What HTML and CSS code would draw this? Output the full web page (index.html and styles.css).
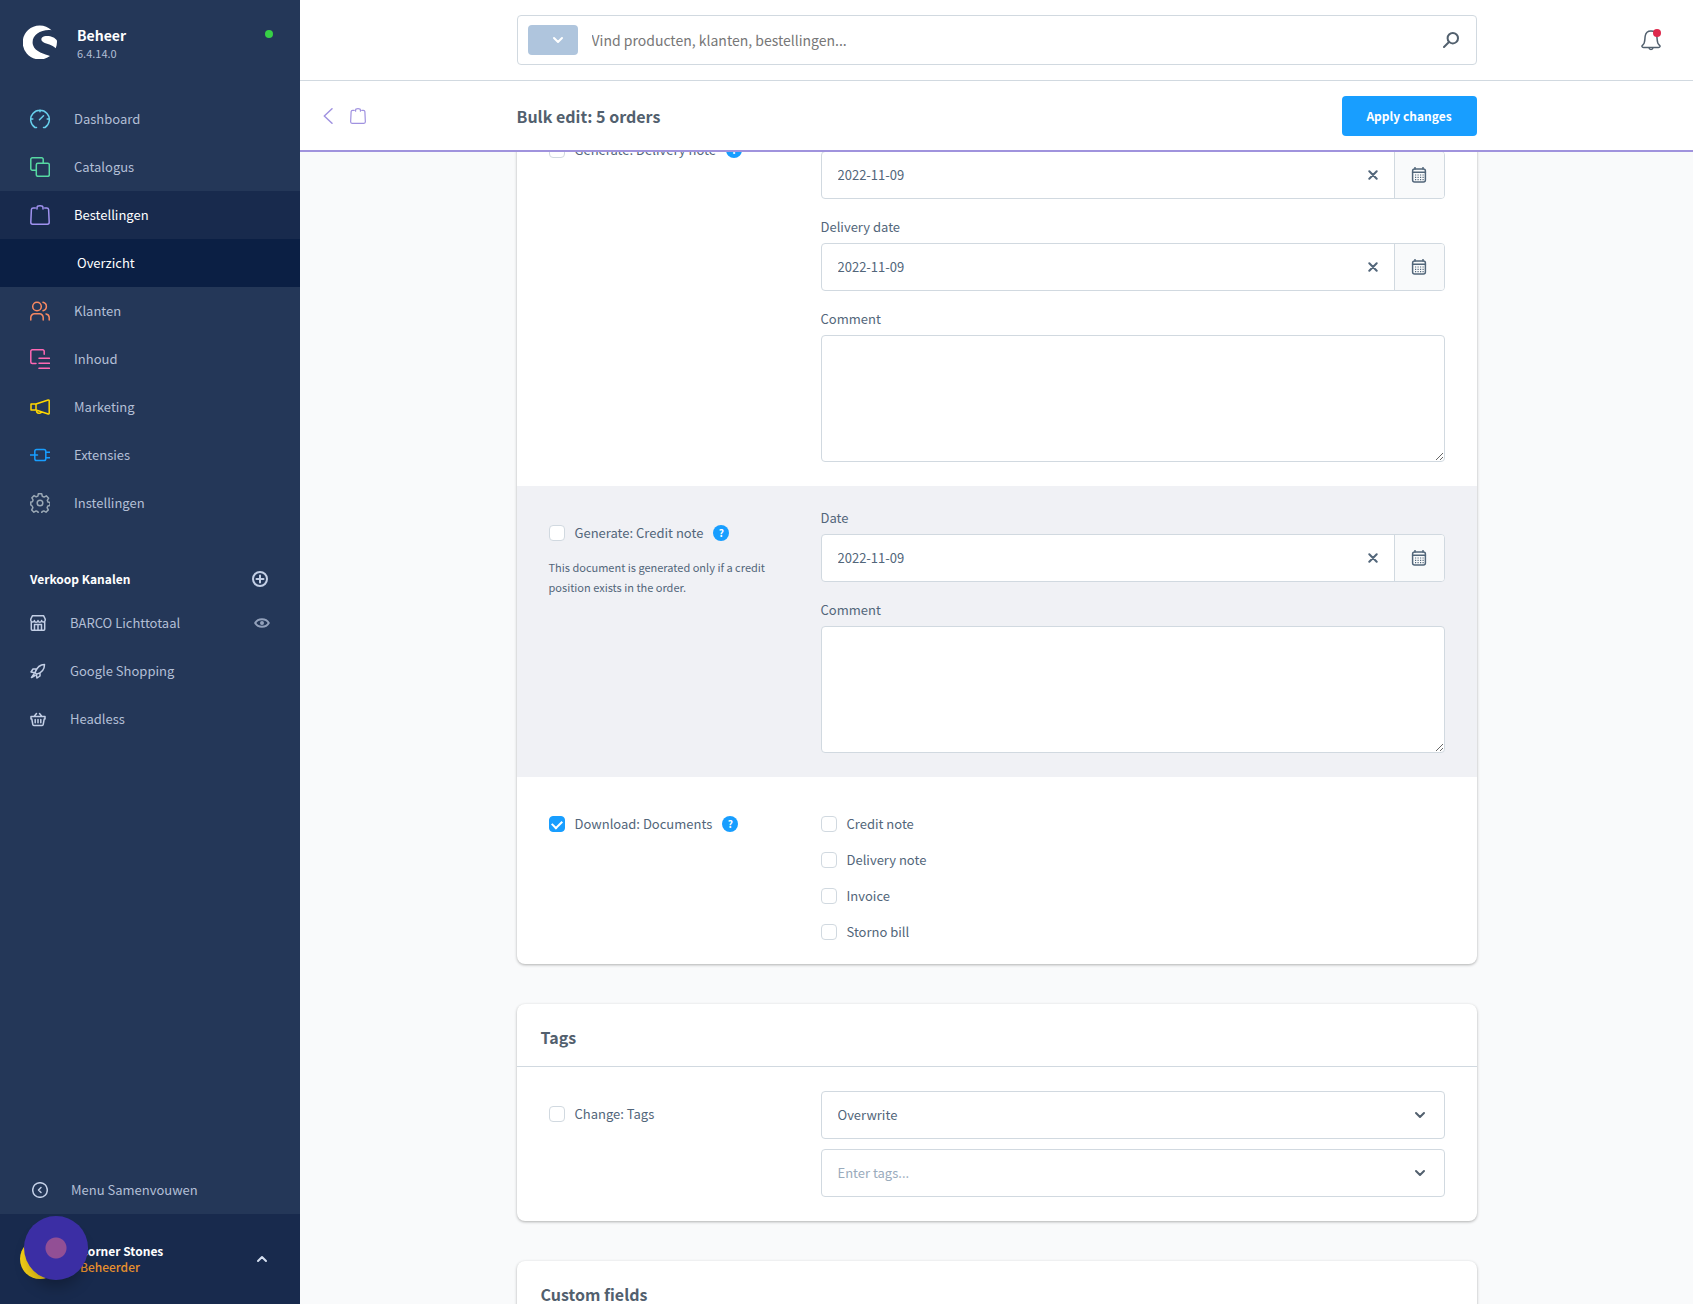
FILE: index.html
```
<!DOCTYPE html>
<html lang="nl">
<head>
    <meta charset="UTF-8">
    <meta name="viewport" content="width=device-width, initial-scale=1.0">
    <title>Bulk edit: 5 orders</title>
    <link rel="stylesheet" href="styles.css">
</head>
<body>
    <!-- Shared icons -->
    <svg class="sprite" aria-hidden="true">
        <symbol id="bag" viewBox="0 0 20 20"><path d="M7 4V2.500C7 1.500 8 .8 10 .8s3 .7 3 1.700V4M5.300 3H3.200C2 3 1.500 3.600 1.400 4.500L.8 17.300c0 1.200.6 1.900 1.700 1.900h15c1.100 0 1.700-.7 1.700-1.900L18.600 4.500C18.500 3.600 18 3 16.800 3h-2.100"/></symbol>
        <symbol id="calendar" viewBox="0 0 16 16"><rect x="1.600" y="2" width="12.800" height="13" rx="2"/><path d="M1.600 5.200h12.800M4 .5V2M12 .5V2"/><path d="M4 8h9M4 10.300h9M4 12.600h9" stroke-width="1.200" stroke-linecap="butt" stroke-dasharray="1.200 1.300"/></symbol>
        <symbol id="cross" viewBox="0 0 10 10"><path d="m1.300 1.300 7.400 7.400m0-7.400L1.300 8.700"/></symbol>
        <symbol id="chevron" viewBox="0 0 12 8"><path d="m2 2 4 4 4-4"/></symbol>
    </svg>

    <div class="layout">
        <!-- Sidebar -->
        <aside class="sidebar">
            <div class="brand">
                <svg class="brand-logo" viewBox="0 0 34 34"><path fill="#fff" d="M28.500 5.200A17 17 0 1 0 27 31c-5-2-15-4-17-11C7.500 11 17 4 28.500 5.200zM33.900 15.500c-2-3.500-8-5.300-12.500-4.200-4 1-3.800 4.500-1 6 3.500 2 8.500 2.200 12.300 6 1-2.400 1.500-5 1.200-7.800z"/></svg>
                <div class="brand-text">
                    <strong>Beheer</strong>
                    <span>6.4.14.0</span>
                </div>
                <span class="status"></span>
            </div>

            <nav class="menu">
                <a href="#"><svg viewBox="0 0 20 20" stroke="#68d0ec"><path d="M6.500 18.500H5a9.300 9.300 0 1 1 10 0h-1.500M10 1v1.800M1 10h1.800M17.200 10H19M9.500 10.800 13.500 6.800"/></svg>Dashboard</a>
                <a href="#"><svg viewBox="0 0 20 20" stroke="#57d9a3"><path d="M6 13.200H2.300A1.500 1.500 0 0 1 .8 11.700V2.300A1.500 1.500 0 0 1 2.300.8h9.400a1.500 1.500 0 0 1 1.500 1.500V6"/><rect x="6.300" y="6.300" width="13" height="13" rx="1.500"/></svg>Catalogus</a>
                <a href="#" class="active"><svg stroke="#a092f0"><use href="#bag"/></svg>Bestellingen</a>
                <a href="#" class="submenu">Overzicht</a>
                <a href="#"><svg viewBox="0 0 20 20" stroke="#f88962"><circle cx="7" cy="5.500" r="4.300"/><path d="M.8 19v-2.500A3.700 3.700 0 0 1 4.500 12.800h5a3.700 3.700 0 0 1 3.700 3.700V19M13 1.300a4.300 4.300 0 0 1 0 8.400M16 12.900a3.700 3.700 0 0 1 3.200 3.600V19"/></svg>Klanten</a>
                <a href="#"><svg viewBox="0 0 20 20" stroke="#ff68b4"><path d="M6 14.500H2.300a1.500 1.500 0 0 1-1.500-1.500V2.300A1.500 1.500 0 0 1 2.300.8h10.400a1.500 1.500 0 0 1 1.500 1.500v3M9 9.300h10.500M9 14.300h10.500M9 19.300h10.500"/></svg>Inhoud</a>
                <a href="#"><svg viewBox="0 0 20 20" stroke="#ffd700"><path d="M1 7h5l12.200-4a.8.8 0 0 1 1 .8v12.400a.8.8 0 0 1-1 .8L6 13H1zM6 7v6M6.500 13.500c0 3.500 4.500 3.500 5 1.200"/></svg>Marketing</a>
                <a href="#"><svg viewBox="0 0 20 20" stroke="#189eff"><rect x="4.800" y="4.500" width="11" height="11" rx="1.800"/><path d="M0 10h7.500M16 7.200h4M16 12.800h4"/></svg>Extensies</a>
                <a href="#"><svg viewBox="0 0 20 20" stroke="#9aa8b5"><path d="m8.300.8h3.400l.6 2.500 1.800.8 2.200-1.300 2.300 2.400-1.300 2.200.7 1.700 2 .5v1.800l-.2 1.200-2 .4-.7 1.700 1.200 2.200-2.300 2.300-2.200-1.300-1.800.8-.5 2.300H8.500l-.6-2.300-1.800-.8-2.200 1.300-2.200-2.300 1.200-2.200-.7-1.700L.8 12V9l1.600-.3.700-1.700-1.200-2.200 2.200-2.200 2.100 1.200 1.700-.7z"/><circle cx="10" cy="10" r="2.800"/></svg>Instellingen</a>
            </nav>

            <!-- Sales channels -->
            <div class="channels-head">
                <h2>Verkoop Kanalen</h2>
                <button type="button" aria-label="Toevoegen"><svg viewBox="0 0 16 16"><circle cx="8" cy="8" r="7"/><path d="M8 4.500v7M4.500 8h7"/></svg></button>
            </div>
            <nav class="menu channels">
                <a href="#"><svg viewBox="0 0 16 16"><path d="M1.300 7v7.200c0 .7.400 1 1 1h11.400c.6 0 1-.3 1-1V7M2.500.7h11l1.700 3.300v1.300c0 2.300-3.600 2.300-3.600.3 0 2.200-3.600 2.200-3.600 0 0 2.200-3.600 2.200-3.600 0 0 2-3.600 2-3.600-.3V4zM4.500 15V9.500h7V15M8 9.500V15"/></svg><span>BARCO Lichttotaal</span><svg class="eye" viewBox="0 0 16 16"><path d="M1.200 8C4 3 12 3 14.800 8 12 13 4 13 1.200 8z"/><circle cx="8" cy="8" r="1"/></svg></a>
                <a href="#"><svg viewBox="0 0 16 16"><path d="M5 9.500C6.500 5.500 9.500 1.500 14.500 1.500c0 5-3.500 8.500-8 9.800zM6 6H3L1 9l3.500.7M10 10v3l-3 2-.7-3.500M4 11l-2.500 3.500L5 12.500"/></svg><span>Google Shopping</span></a>
                <a href="#"><svg viewBox="0 0 16 16"><path d="M1 5.500h14v2.500h-.8l-1 5.500c-.1.700-.5 1-1 1H3.800c-.5 0-.9-.3-1-1L1.800 8H1zM4 5.500l2.500-3M12 5.500l-2.500-3M5.200 8.500v3.200M8 8.500v3.200M10.800 8.500v3.200"/></svg><span>Headless</span></a>
            </nav>

            <button type="button" class="collapse"><svg viewBox="0 0 16 16"><circle cx="8" cy="8" r="7.300"/><path d="M9 5.500 6.500 8 9 10.500"/></svg>Menu Samenvouwen</button>

            <div class="user">
                <span class="avatar"></span>
                <div class="user-text">
                    <strong>Corner Stones</strong>
                    <span>Beheerder</span>
                </div>
                <svg class="caret" viewBox="0 0 12 8"><path d="m2 6 4-4 4 4"/></svg>
                <button type="button" class="recorder" aria-label="Opname"></button>
            </div>
        </aside>

        <main class="main">
            <!-- Search bar -->
            <header class="topbar">
                <div class="search">
                    <button type="button" class="search-type" aria-label="Type"><svg><use href="#chevron"/></svg></button>
                    <input type="text" placeholder="Vind producten, klanten, bestellingen..." aria-label="Zoeken">
                    <svg class="search-icon" viewBox="0 0 16 16"><circle cx="9.800" cy="6.200" r="5.200"/><path d="M6 10 1 15"/></svg>
                </div>
                <button type="button" class="bell" aria-label="Meldingen">
                    <svg viewBox="0 0 20 22"><path d="M2.500 18.500h15c1.700 0 2-1.500.8-2.400C15.500 14 16.500 11 15.800 7 15.300 3.800 13 2 10 2S4.700 3.800 4.200 7c-.7 4 .3 7-2.500 9.100-1.200.9-.9 2.400.8 2.400zM8 19c.3 2 3.700 2 4 0"/></svg>
                </button>
            </header>

            <!-- Page title -->
            <div class="page-head">
                <div class="page-nav">
                    <a href="#" aria-label="Terug"><svg class="back" viewBox="0 0 10 16"><path d="M9 .8 1.300 8 9 15.200"/></svg></a>
                    <svg class="page-icon"><use href="#bag"/></svg>
                </div>
                <div class="page-bar">
                    <h1>Bulk edit: 5 orders</h1>
                    <button type="button" class="apply">Apply changes</button>
                </div>
            </div>

            <div class="content">
                <div class="scrolled">
                    <section class="card">
                        <div class="row">
                            <div class="change">
                                <div class="check">
                                    <input type="checkbox" id="gen-delivery">
                                    <label for="gen-delivery">Generate: Delivery note</label>
                                    <span class="help">?</span>
                                </div>
                            </div>
                            <div class="fields">
                                <div class="field">
                                    <label for="dn-date">Date</label>
                                    <div class="date">
                                        <input type="text" id="dn-date" value="2022-11-09">
                                        <button type="button" class="clear" aria-label="Clear"><svg><use href="#cross"/></svg></button>
                                        <button type="button" class="pick" aria-label="Calendar"><svg><use href="#calendar"/></svg></button>
                                    </div>
                                </div>
                                <div class="field">
                                    <label for="dn-delivery">Delivery date</label>
                                    <div class="date">
                                        <input type="text" id="dn-delivery" value="2022-11-09">
                                        <button type="button" class="clear" aria-label="Clear"><svg><use href="#cross"/></svg></button>
                                        <button type="button" class="pick" aria-label="Calendar"><svg><use href="#calendar"/></svg></button>
                                    </div>
                                </div>
                                <div class="field">
                                    <label for="dn-comment">Comment</label>
                                    <textarea id="dn-comment"></textarea>
                                </div>
                            </div>
                        </div>

                        <div class="row shaded">
                            <div class="change">
                                <div class="check">
                                    <input type="checkbox" id="gen-credit">
                                    <label for="gen-credit">Generate: Credit note</label>
                                    <span class="help">?</span>
                                </div>
                                <p>This document is generated only if a credit position exists in the order.</p>
                            </div>
                            <div class="fields">
                                <div class="field">
                                    <label for="cn-date">Date</label>
                                    <div class="date">
                                        <input type="text" id="cn-date" value="2022-11-09">
                                        <button type="button" class="clear" aria-label="Clear"><svg><use href="#cross"/></svg></button>
                                        <button type="button" class="pick" aria-label="Calendar"><svg><use href="#calendar"/></svg></button>
                                    </div>
                                </div>
                                <div class="field">
                                    <label for="cn-comment">Comment</label>
                                    <textarea id="cn-comment"></textarea>
                                </div>
                            </div>
                        </div>

                        <div class="row">
                            <div class="change">
                                <div class="check">
                                    <input type="checkbox" id="download" checked>
                                    <label for="download">Download: Documents</label>
                                    <span class="help">?</span>
                                </div>
                            </div>
                            <div class="documents">
                                <div class="check"><input type="checkbox" id="doc-credit"><label for="doc-credit">Credit note</label></div>
                                <div class="check"><input type="checkbox" id="doc-delivery"><label for="doc-delivery">Delivery note</label></div>
                                <div class="check"><input type="checkbox" id="doc-invoice"><label for="doc-invoice">Invoice</label></div>
                                <div class="check"><input type="checkbox" id="doc-storno"><label for="doc-storno">Storno bill</label></div>
                            </div>
                        </div>
                    </section>

                    <section class="card">
                        <h2 class="card-title">Tags</h2>
                        <div class="row">
                            <div class="change">
                                <div class="check">
                                    <input type="checkbox" id="change-tags">
                                    <label for="change-tags">Change: Tags</label>
                                </div>
                            </div>
                            <div class="selects">
                                <div class="select">
                                    <select aria-label="Change type">
                                        <option>Overwrite</option>
                                        <option>Clear</option>
                                        <option>Add</option>
                                        <option>Remove</option>
                                    </select>
                                    <svg><use href="#chevron"/></svg>
                                </div>
                                <div class="select">
                                    <input type="text" placeholder="Enter tags..." aria-label="Tags">
                                    <svg><use href="#chevron"/></svg>
                                </div>
                            </div>
                        </div>
                    </section>

                    <section class="card">
                        <h2 class="card-title">Custom fields</h2>
                    </section>
                </div>
            </div>
        </main>
    </div>
</body>
</html>
```
FILE: styles.css
```
/* General */
* {
    box-sizing: border-box;
}

body {
    margin: 0;
    font-family: "Noto Sans CJK SC", "Noto Sans", sans-serif;
    font-size: 13px;
    line-height: 16px;
    color: #52667a;
    background: #f9fafb;
}

button,
input,
select,
textarea {
    font: inherit;
    color: inherit;
    margin: 0;
}

button {
    padding: 0;
    border: 0;
    background: none;
    cursor: pointer;
}

a {
    color: inherit;
    text-decoration: none;
}

h1,
h2,
p {
    margin: 0;
}

svg {
    display: block;
    flex: none;
    fill: none;
    stroke-width: 1.5;
    stroke-linecap: round;
    stroke-linejoin: round;
}

.sprite {
    position: absolute;
    width: 0;
    height: 0;
}

.layout {
    display: flex;
    height: 100vh;
    overflow: hidden;
}

/* Sidebar */
.sidebar {
    display: flex;
    flex-direction: column;
    flex: none;
    width: 300px;
    color: #b3bfd6;
    background: #243758;
}

.brand {
    display: flex;
    align-items: flex-start;
    height: 95px;
    padding: 25px 27px 0 23px;
}

.brand-logo {
    width: 34px;
    height: 34px;
}

.brand-text {
    display: flex;
    flex-direction: column;
    flex: 1;
    margin-left: 20px;
    font-size: 11px;
}

.brand-text strong {
    font-size: 14px;
    line-height: 20px;
    color: #fff;
}

.status {
    width: 8px;
    height: 8px;
    margin-top: 5px;
    border-radius: 50%;
    background: #37d046;
}

.menu a {
    display: flex;
    align-items: center;
    gap: 24px;
    height: 48px;
    padding: 0 30px;
}

.menu svg {
    width: 20px;
    height: 20px;
}

.menu .active {
    color: #fff;
    background: #182a4d;
}

.menu .submenu {
    padding-left: 77px;
    color: #fff;
    background: #0b1f44;
}

.channels-head {
    display: flex;
    justify-content: space-between;
    align-items: center;
    height: 40px;
    margin-top: 32px;
    padding: 0 32px 0 30px;
}

.channels-head h2 {
    font-size: 12px;
    color: #fff;
}

.sidebar .channels svg,
.channels-head svg,
.collapse svg {
    width: 16px;
    height: 16px;
    stroke: #c3cfe6;
}

.channels-head svg {
    stroke-width: 2;
}

.channels span {
    flex: 1;
}

.channels .eye {
    stroke-width: 2;
    opacity: 0.7;
}

.collapse {
    display: flex;
    align-items: center;
    gap: 23px;
    height: 48px;
    margin-top: auto;
    padding: 0 32px;
}

.user {
    position: relative;
    display: flex;
    align-items: center;
    height: 90px;
    padding: 0 32px 0 20px;
    background: #182a4d;
}

.avatar {
    width: 40px;
    height: 40px;
    border-radius: 50%;
    background: #f5cf17;
}

.user-text {
    display: flex;
    flex-direction: column;
    flex: 1;
    margin-left: 20px;
    font-size: 12px;
    color: #fff;
}

.user-text span {
    font-weight: 500;
    color: #e8912d;
}

.caret {
    width: 12px;
    height: 8px;
    stroke: #d5dff0;
    stroke-width: 2;
}

/* Round button floating over the user block */
.recorder {
    position: absolute;
    top: 2px;
    left: 24px;
    width: 64px;
    height: 64px;
    border-radius: 50%;
    background: radial-gradient(circle, #924f95 10px, #3b2ea4 11px);
    box-shadow: 0 12px 16px -6px rgba(0, 0, 0, 0.3);
}

/* Top of the page */
.main {
    display: flex;
    flex-direction: column;
    flex: 1;
    min-width: 0;
}

.topbar {
    display: grid;
    grid-template-columns: 1fr minmax(0, 960px) 1fr;
    align-items: center;
    flex: none;
    height: 81px;
    border-bottom: 1px solid #d1d9e0;
    background: #fff;
}

.search {
    grid-column: 2;
    display: flex;
    align-items: center;
    height: 50px;
    padding: 0 17px 0 10px;
    border: 1px solid #d1d9e0;
    border-radius: 4px;
}

.search-type {
    display: flex;
    justify-content: flex-end;
    align-items: center;
    width: 50px;
    height: 30px;
    padding-right: 14px;
    border-radius: 4px;
    background: #afc5dd;
}

.search-type svg {
    width: 12px;
    height: 8px;
    stroke: #fff;
    stroke-width: 2;
}

.search input {
    flex: 1;
    min-width: 0;
    padding: 0 14px;
    border: 0;
    outline: 0;
    font-size: 14px;
    line-height: 20px;
    background: none;
}

.search input::placeholder {
    color: #777;
}

.search-icon {
    width: 16px;
    height: 16px;
    stroke: #52606e;
    stroke-width: 2;
}

.bell {
    position: relative;
    justify-self: end;
    margin-right: 32px;
}

.bell svg {
    width: 20px;
    height: 22px;
    stroke: #52606e;
}

.bell::after {
    content: "";
    position: absolute;
    top: 0;
    right: 0;
    width: 8px;
    height: 8px;
    border-radius: 50%;
    background: #de294c;
}

.page-head {
    display: grid;
    grid-template-columns: 1fr minmax(0, 960px) 1fr;
    align-items: center;
    flex: none;
    height: 71px;
    border-bottom: 2px solid #a093dd;
    background: #fff;
}

.page-nav {
    display: flex;
    align-items: center;
    gap: 17px;
    padding-left: 23px;
    stroke: #a092e0;
}

.back {
    width: 10px;
    height: 16px;
}

.page-icon {
    width: 16px;
    height: 16px;
}

.page-bar {
    display: flex;
    justify-content: space-between;
    align-items: center;
}

.page-bar h1 {
    font-size: 16px;
    line-height: 24px;
}

.apply {
    width: 135px;
    height: 40px;
    border-radius: 4px;
    font-size: 12px;
    font-weight: 700;
    color: #fff;
    background: #189eff;
}

/* Cards */
.content {
    flex: 1;
    min-height: 0;
    overflow: hidden;
}

.scrolled {
    max-width: 960px;
    margin: -49px auto 0;
}

.card {
    margin-bottom: 40px;
    border-radius: 8px;
    background: #fff;
    box-shadow: 0 1px 3px rgba(0, 0, 0, 0.3);
}

.card-title {
    height: 63px;
    padding: 21px 24px;
    border-bottom: 1px solid #d1d9e0;
    font-size: 16px;
    line-height: 24px;
}

.page-bar h1,
.card-title {
    color: #52606e;
}

.row {
    display: grid;
    grid-template-columns: 5fr 13fr;
    gap: 32px;
    padding: 24px 32px;
}

.shaded {
    background: #f0f1f5;
}

.change,
.documents {
    padding-top: 15px;
}

.documents {
    display: flex;
    flex-direction: column;
    gap: 20px;
}

.check {
    display: flex;
    align-items: center;
    gap: 10px;
}

.check input {
    appearance: none;
    width: 16px;
    height: 16px;
    border: 1px solid #d1d9e0;
    border-radius: 4px;
    background: #fff;
}

.check input:checked {
    display: grid;
    place-items: center;
    border-color: #189eff;
    background: #189eff;
}

.check input:checked::after {
    content: "";
    width: 8px;
    height: 5px;
    border: solid #fff;
    border-width: 0 0 2px 2px;
    transform: translateY(-1px) rotate(-45deg);
}

.help {
    width: 16px;
    border-radius: 50%;
    font-size: 10px;
    font-weight: 700;
    text-align: center;
    color: #fff;
    background: #189eff;
}

.change p {
    margin-top: 16px;
    font-size: 11px;
    line-height: 20px;
}

/* Form fields */
.fields {
    display: flex;
    flex-direction: column;
    gap: 20px;
}

.field {
    display: flex;
    flex-direction: column;
    gap: 8px;
}

.date,
.select,
textarea {
    border: 1px solid #d1d9e0;
    border-radius: 4px;
    background: #fff;
}

.date,
.select {
    display: flex;
    align-items: center;
    height: 48px;
    overflow: hidden;
}

.date input,
.select input,
.select select {
    appearance: none;
    flex: 1;
    align-self: stretch;
    min-width: 0;
    padding: 0 16px;
    border: 0;
    outline: 0;
    background: none;
}

.clear {
    padding: 16px;
}

.clear svg {
    width: 10px;
    height: 10px;
    stroke: #52667a;
    stroke-width: 2;
}

.pick {
    display: grid;
    place-items: center;
    align-self: stretch;
    width: 50px;
    border-left: 1px solid #d1d9e0;
    background: #f9fafb;
}

.pick svg {
    width: 16px;
    height: 16px;
    stroke: #52667a;
}

textarea {
    display: block;
    width: 100%;
    height: 127px;
    padding: 12px 16px;
    outline: 0;
    resize: vertical;
}

.selects {
    display: flex;
    flex-direction: column;
    gap: 10px;
}

.select {
    position: relative;
}

.select svg {
    position: absolute;
    right: 18px;
    width: 12px;
    height: 8px;
    stroke: #52606e;
    stroke-width: 2;
    pointer-events: none;
}

.select input::placeholder {
    color: #9aabbc;
}
```
